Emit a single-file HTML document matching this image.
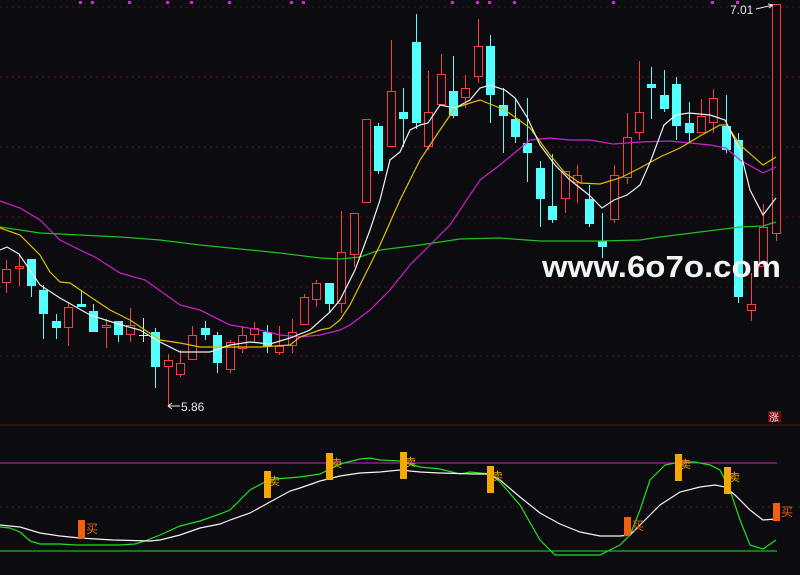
<!DOCTYPE html>
<html><head><meta charset="utf-8"><style>
html,body{margin:0;padding:0;background:#0c0c10;width:800px;height:575px;overflow:hidden}
svg{display:block}
text{font-family:"Liberation Sans","Noto Sans CJK SC",sans-serif}
</style></head><body>
<svg id="s" width="800" height="575" viewBox="0 0 800 575" xmlns="http://www.w3.org/2000/svg">
<rect width="800" height="575" fill="#0c0c10"/>
<g id="grid" stroke="#5a1212" stroke-width="1" stroke-dasharray="2,4"></g>
<g id="c" shape-rendering="crispEdges"></g>
<g id="ma" fill="none" stroke-width="1.2"></g>
<text x="181" y="411" fill="#e8e8e8" font-size="12">5.86</text>
<path d="M168,406 H180 M168,406 l4,-3 M168,406 l4,3" stroke="#e8e8e8" fill="none"/>
<text x="730" y="14" fill="#e8e8e8" font-size="12">7.01</text>
<path d="M756,9 L773,5 M773,5 l-5,-1 M773,5 l-4,3" stroke="#e8e8e8" fill="none"/>
<text x="542" y="277" fill="#f4f4f4" font-size="31" font-weight="bold" textLength="239" lengthAdjust="spacingAndGlyphs">www.6o7o.com</text>
<rect x="768" y="411" width="13" height="11" fill="#7a0a0a"/>
<text x="769" y="421" fill="#e8e8e8" font-size="10">涨</text>
<line x1="0" y1="425" x2="800" y2="425" stroke="#5a1212"/>
<line x1="0" y1="507" x2="800" y2="507" stroke="#5a1212" stroke-dasharray="2,4"/>
<line x1="0" y1="463" x2="777" y2="463" stroke="#d020d0"/>
<line x1="0" y1="551" x2="777" y2="551" stroke="#20e020"/>
<g id="low" fill="none" stroke-width="1.2"></g>
<g id="mk"></g>
</svg>
<script>
var NS="http://www.w3.org/2000/svg";
function el(p,t,a,txt){var e=document.createElementNS(NS,t);for(var k in a)e.setAttribute(k,a[k]);if(txt)e.textContent=txt;document.getElementById(p).appendChild(e);return e;}
[7,77,147,217,287,356].forEach(function(y){el("grid","line",{x1:0,y1:y,x2:800,y2:y});});
[80,92,129,167,191,229,291,303,452,477,489,514,613,712,737].forEach(function(x){el("c","rect",{x:x-1,y:1,width:3,height:3,fill:"#e020e0"});});
var C=[[6,269,283,260,293,'r'],[19,266,269,254,286,'r'],[31,259,286,259,297,'c'],[43,290,314,285,339,'c'],[56,321,328,314,339,'c'],[68,307,328,302,346,'r'],[81,304,307,290,307,'c'],[93,311,332,304,332,'c'],[106,325,328,319,348,'r'],[118,321,335,321,342,'c'],[130,325,335,308,342,'r'],[143,335,335,318,342,'w'],[155,332,367,328,388,'c'],[168,360,367,354,407,'r'],[180,363,375,350,377,'r'],[192,335,360,326,360,'r'],[205,328,335,321,340,'c'],[217,335,363,332,373,'c'],[230,342,370,340,373,'r'],[242,335,349,326,353,'r'],[254,328,335,322,342,'r'],[267,332,346,325,353,'c'],[279,346,353,326,355,'r'],[292,332,346,319,353,'r'],[304,297,325,294,325,'r'],[316,283,300,280,307,'r'],[329,283,304,283,312,'c'],[341,252,304,211,313,'r'],[354,213,255,213,267,'r'],[366,119,203,119,203,'r'],[378,126,171,123,174,'c'],[391,91,147,40,147,'r'],[403,112,119,88,147,'c'],[416,42,123,14,129,'c'],[428,112,147,71,150,'r'],[441,74,105,54,105,'r'],[453,91,116,56,118,'c'],[465,88,98,75,108,'r'],[478,46,77,19,83,'r'],[490,46,95,35,123,'c'],[503,105,116,88,153,'c'],[515,119,137,98,143,'c'],[527,143,153,98,182,'c'],[540,168,199,161,227,'c'],[552,206,220,154,223,'c'],[565,171,199,171,213,'r'],[577,175,183,165,203,'r'],[589,199,224,185,227,'c'],[602,241,247,213,258,'c'],[614,175,220,165,223,'r'],[627,137,178,113,184,'r'],[639,112,133,61,140,'r'],[651,84,88,67,119,'c'],[664,95,109,70,112,'c'],[676,84,126,77,140,'c'],[689,123,133,102,143,'c'],[701,116,133,99,133,'r'],[713,98,123,89,133,'r'],[726,126,150,95,153,'c'],[738,140,297,133,303,'c'],[751,304,311,273,321,'r'],[763,227,267,204,267,'r'],[776,4,234,4,241,'r']];
C.forEach(function(d){var x=d[0],col=d[5]=='r'?'#ff3c3c':d[5]=='c'?'#54ffff':'#e0e0e0';
el("c","rect",{x:x,y:d[3],width:1,height:d[4]-d[3],fill:col});
if(d[5]=='r'){var h=Math.max(d[2]-d[1],2);el("c","rect",{x:x-4,y:d[1],width:9,height:h,fill:col});el("c","rect",{x:x-3,y:d[1]+1,width:7,height:h-2,fill:"#0c0c10"});}
else if(d[5]=='c')el("c","rect",{x:x-4,y:d[1],width:9,height:Math.max(d[2]-d[1],2),fill:col});
else el("c","rect",{x:x-4,y:d[1],width:9,height:1,fill:col});});
function pl(g,pts,col){el(g,"polyline",{points:pts.map(function(p){return p.join(",")}).join(" "),stroke:col});}
pl("ma",[[0,227],[40,233],[80,235],[120,237],[160,240],[200,245],[240,249],[280,253],[320,258],[340,259],[360,257],[380,250],[420,245],[460,239],[500,238],[540,241],[600,241],[640,240],[660,237],[700,232],[740,227],[763,226],[776,222]],"#20c020");
pl("ma",[[0,201],[20,208],[40,220],[60,240],[80,250],[95,257],[120,273],[145,280],[180,305],[200,310],[230,325],[260,330],[280,335],[300,337],[320,335],[340,330],[350,325],[370,310],[390,290],[410,265],[430,245],[450,225],[480,180],[500,165],[530,140],[550,138],[570,140],[590,140],[613,144],[640,142],[670,141],[690,143],[710,145],[726,148],[740,160],[763,173],[776,167]],"#d020d0");
pl("ma",[[0,228],[20,235],[40,255],[50,272],[60,282],[70,283],[95,300],[110,310],[130,320],[160,340],[180,343],[200,347],[230,347],[260,347],[290,345],[300,337],[320,330],[330,328],[340,320],[350,305],[360,285],[370,265],[380,245],[400,200],[420,160],[440,130],[455,108],[470,103],[480,100],[505,110],[530,128],[550,155],[565,173],[580,183],[600,184],[620,178],[640,168],[660,157],[680,148],[700,136],[720,125],[727,125],[740,145],[763,165],[776,157]],"#e0c000");
pl("ma",[[0,250],[7,247],[19,254],[40,285],[60,298],[90,315],[118,324],[140,330],[160,342],[180,352],[190,352],[210,352],[230,345],[250,342],[270,344],[290,338],[310,330],[330,312],[340,300],[355,270],[370,230],[380,200],[390,160],[400,152],[410,130],[420,125],[428,123],[440,105],[455,108],[470,100],[480,88],[490,85],[505,90],[515,98],[527,117],[540,145],[555,165],[570,180],[589,195],[602,208],[614,200],[627,195],[640,185],[651,160],[664,125],[676,115],[689,113],[710,115],[725,120],[740,150],[750,190],[763,215],[776,198]],"#f0f0f0");
pl("low",[[0,527],[10,528],[20,532],[30,541],[40,544],[60,544],[75,545],[100,545],[120,545],[135,544],[145,541],[160,535],[180,526],[200,521],[220,514],[230,510],[240,500],[250,490],[265,482],[275,479],[300,477],[320,474],[340,464],[360,459],[370,458],[380,460],[400,461],[420,467],[440,469],[460,474],[470,472],[490,474],[500,482],[520,505],[540,540],[555,555],[580,555],[600,555],[620,545],[630,535],[640,510],[650,480],[665,465],[680,462],[695,462],[710,465],[720,470],[730,490],[740,520],[750,545],[763,549],[776,540]],"#20e020");
pl("low",[[0,525],[20,527],[40,533],[60,536],[80,538],[113,540],[150,541],[160,540],[180,535],[200,528],[220,524],[230,520],[250,513],[270,502],[290,491],[300,488],[320,481],[340,476],[360,473],[380,472],[400,470],[420,472],[440,473],[475,474],[490,474],[500,480],[520,497],[540,513],[560,524],[580,532],[600,536],[620,536],[630,535],[640,525],[660,505],[680,492],[700,487],[715,485],[725,487],[735,495],[750,510],[763,520],[776,519]],"#f4f4f4");
[[264,471],[326,453],[400,452],[487,466],[675,454],[724,467]].forEach(function(m){el("mk","rect",{x:m[0],y:m[1],width:7,height:27,fill:"#f5a800"});el("mk","text",{x:m[0]+5,y:m[1]+14,fill:"#f0a800","font-size":11},"卖");});
[[78,520,19],[624,517,19],[773,503,18]].forEach(function(m){el("mk","rect",{x:m[0],y:m[1],width:7,height:m[2],fill:"#f06010"});el("mk","text",{x:m[0]+8,y:m[1]+13,fill:"#f06010","font-size":12},"买");});
</script>
</body></html>
